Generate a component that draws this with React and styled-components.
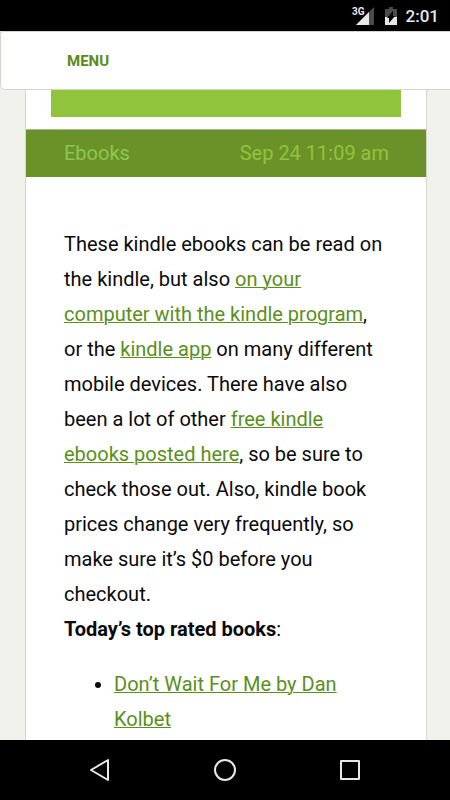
import styled, { createGlobalStyle } from "styled-components";

const GlobalStyle = createGlobalStyle`
  * {
    box-sizing: border-box;
  }
  body {
    margin: 0;
    background-color: #f1f2ec;
    color: #0a0a0a;
    font-family: Roboto, "Liberation Sans", sans-serif;
    font-size: 20px;
    line-height: 35px;
  }
`;

const Screen = styled.div`
  display: flex;
  flex-direction: column;
  height: 100vh;
  overflow: hidden;
`;

const StatusBar = styled.div`
  display: flex;
  flex-shrink: 0;
  align-items: center;
  justify-content: flex-end;
  height: 31px;
  padding-right: 11px;
  background-color: #000;
  color: #e8e8e8;
`;

const Signal = styled.svg`
  width: 22px;
  height: 20px;
  margin-right: 10px;
`;

const NetworkType = styled.text`
  font-size: 10px;
  font-weight: 700;
  fill: #e8e8e8;
  stroke: #000;
  stroke-width: 2px;
  paint-order: stroke;
`;

const Battery = styled.svg`
  width: 14px;
  height: 20px;
  margin-right: 8px;
`;

const Clock = styled.span`
  font-size: 17px;
  font-weight: 500;
  line-height: 32px;
`;

const Header = styled.header`
  display: flex;
  flex-shrink: 0;
  align-items: center;
  height: 59px;
  padding: 0 66px;
  border: 1px solid #d5d6cb;
  border-right: none;
  border-radius: 3px 0 0 5px;
  background-color: #fff;
`;

const MenuButton = styled.button`
  padding: 0;
  border: none;
  background: none;
  color: #5a8a1a;
  font-family: inherit;
  font-size: 15px;
  font-weight: 700;
  line-height: 20px;
  cursor: pointer;
`;

const Page = styled.main`
  flex: 1;
  min-height: 0;
  padding: 0 23px 0 25px;
  overflow: hidden;
`;

const Card = styled.article`
  min-height: 100%;
  border: 1px solid #d5d6cb;
  border-top: none;
  border-bottom: none;
  background-color: #fff;
`;

const Banner = styled.div`
  height: 27px;
  margin: 0 25px 12px;
  background-color: #8fc43c;
`;

const Meta = styled.div`
  display: flex;
  align-items: center;
  justify-content: space-between;
  height: 48px;
  padding: 0 37px 0 38px;
  border-top: 1px solid #a9bc8b;
  background-color: #6b9228;
  color: #8fc43c;
`;

const Category = styled.a`
  color: #8cc751;
  text-decoration: none;
`;

const Content = styled.div`
  padding: 50px 38px 0;
`;

const Paragraph = styled.p`
  margin: 0 0 20px;
`;

const TextLink = styled.a`
  color: #5a8f1b;
  text-decoration: underline;
  text-decoration-thickness: 1px;
`;

const BookList = styled.ul`
  margin: 0;
  padding-left: 50px;
`;

const NavBar = styled.nav`
  display: flex;
  flex-shrink: 0;
  align-items: center;
  justify-content: center;
  gap: 101px;
  height: 60px;
  background-color: #000;
`;

const NavButton = styled.button`
  width: 24px;
  height: 24px;
  padding: 0;
  border: none;
  background: none;
  cursor: pointer;
  svg {
    display: block;
    fill: none;
    stroke: #e8e8e8;
    stroke-width: 2;
    stroke-linejoin: round;
  }
`;

function SignalIcon() {
  return (
    <Signal viewBox="0 0 22 20">
      <path d="M22 1v18H4z" fill="#4a4a4a" />
      <path d="M17 6v13H4z" fill="#e8e8e8" />
      <NetworkType x="0" y="9">
        3G
      </NetworkType>
    </Signal>
  );
}

function BatteryIcon() {
  return (
    <Battery viewBox="0 0 14 20">
      <path d="M5 1h4v2h4v8H1V3h4z" fill="#4a4a4a" />
      <path d="M1 11h12v8H1z" fill="#e8e8e8" />
      <path d="M9 5v5h2l-6 7v-5H3z" fill="#000" />
    </Battery>
  );
}

function App() {
  return (
    <>
      <GlobalStyle />
      <Screen>
        <StatusBar>
          <SignalIcon />
          <BatteryIcon />
          <Clock>2:01</Clock>
        </StatusBar>
        <Header>
          <MenuButton type="button">MENU</MenuButton>
        </Header>
        <Page>
          <Card>
            <Banner />
            <Meta>
              <Category href="#ebooks">Ebooks</Category>
              <time>Sep 24 11:09 am</time>
            </Meta>
            <Content>
              <Paragraph>
                These kindle ebooks can be read on the kindle, but also{" "}
                <TextLink href="#program">
                  on your computer with the kindle program
                </TextLink>
                , or the <TextLink href="#app">kindle app</TextLink> on many
                different mobile devices. There have also been a lot of other{" "}
                <TextLink href="#free">free kindle ebooks posted here</TextLink>
                , so be sure to check those out. Also, kindle book prices change
                very frequently, so make sure it’s $0 before you checkout.
                <br />
                <strong>Today’s top rated books</strong>:
              </Paragraph>
              <BookList>
                <li>
                  <TextLink href="#book">
                    Don’t Wait For Me by Dan Kolbet
                  </TextLink>
                </li>
              </BookList>
            </Content>
          </Card>
        </Page>
        <NavBar>
          <NavButton type="button" aria-label="Back">
            <svg width="24" height="24" viewBox="0 0 24 24">
              <path d="M20 2v20L3 12z" />
            </svg>
          </NavButton>
          <NavButton type="button" aria-label="Home">
            <svg width="24" height="24" viewBox="0 0 24 24">
              <circle cx="12" cy="12" r="10" />
            </svg>
          </NavButton>
          <NavButton type="button" aria-label="Recent apps">
            <svg width="24" height="24" viewBox="0 0 24 24">
              <path d="M3 3h18v18H3z" />
            </svg>
          </NavButton>
        </NavBar>
      </Screen>
    </>
  );
}

export default App;
